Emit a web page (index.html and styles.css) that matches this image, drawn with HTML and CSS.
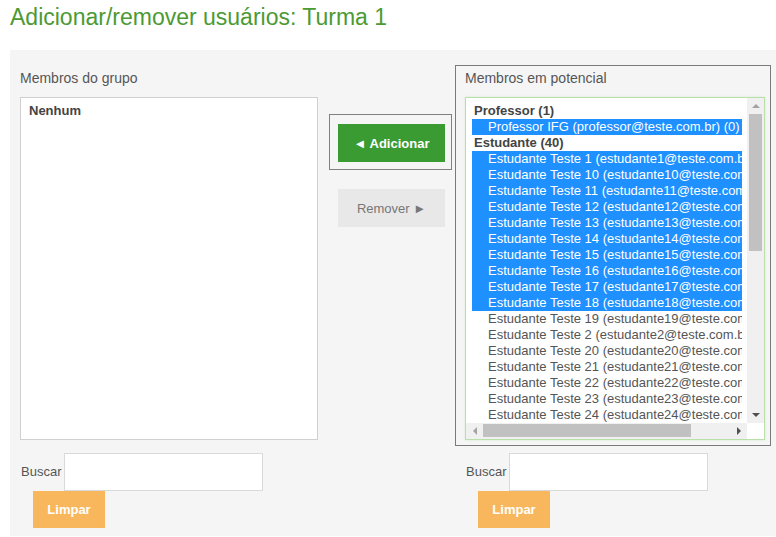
FILE: index.html
```html
<!DOCTYPE html>
<html lang="pt-BR">
<head>
<meta charset="utf-8">
<title>Adicionar/remover usuários: Turma 1</title>
<link rel="stylesheet" href="styles.css">
</head>
<body>
<h1 class="title">Adicionar/remover usuários: Turma 1</h1>
<div class="panel">
  <div class="col-left">
    <div class="cap">Membros do grupo</div>
    <div class="listbox plain">
      <div class="grp">Nenhum</div>
    </div>
  </div>
  <div class="col-mid">
    <div class="add-wrap"><button class="btn btn-add">◄ Adicionar</button></div>
    <button class="btn btn-remove">Remover ►</button>
  </div>
  <div class="col-right">
    <div class="cap">Membros em potencial</div>
    <div class="listbox focus">
      <div class="lb-content">
        <div class="grp">Professor (1)</div>
        <div class="opt sel">Professor IFG (professor@teste.com.br) (0)</div>
        <div class="grp">Estudante (40)</div>
        <div class="opt sel">Estudante Teste 1 (estudante1@teste.com.br) (0)</div>
        <div class="opt sel">Estudante Teste 10 (estudante10@teste.com.br) (0)</div>
        <div class="opt sel">Estudante Teste 11 (estudante11@teste.com.br) (0)</div>
        <div class="opt sel">Estudante Teste 12 (estudante12@teste.com.br) (0)</div>
        <div class="opt sel">Estudante Teste 13 (estudante13@teste.com.br) (0)</div>
        <div class="opt sel">Estudante Teste 14 (estudante14@teste.com.br) (0)</div>
        <div class="opt sel">Estudante Teste 15 (estudante15@teste.com.br) (0)</div>
        <div class="opt sel">Estudante Teste 16 (estudante16@teste.com.br) (0)</div>
        <div class="opt sel">Estudante Teste 17 (estudante17@teste.com.br) (0)</div>
        <div class="opt sel">Estudante Teste 18 (estudante18@teste.com.br) (0)</div>
        <div class="opt">Estudante Teste 19 (estudante19@teste.com.br) (0)</div>
        <div class="opt">Estudante Teste 2 (estudante2@teste.com.br) (0)</div>
        <div class="opt">Estudante Teste 20 (estudante20@teste.com.br) (0)</div>
        <div class="opt">Estudante Teste 21 (estudante21@teste.com.br) (0)</div>
        <div class="opt">Estudante Teste 22 (estudante22@teste.com.br) (0)</div>
        <div class="opt">Estudante Teste 23 (estudante23@teste.com.br) (0)</div>
        <div class="opt">Estudante Teste 24 (estudante24@teste.com.br) (0)</div>
        <div class="opt">Estudante Teste 25 (estudante25@teste.com.br) (0)</div>
        <div class="opt">Estudante Teste 26 (estudante26@teste.com.br) (0)</div>
      </div>
      <div class="vbar">
        <div class="arrow-btn"><span class="tri tri-up"></span></div>
        <div class="vthumb"></div>
        <div class="spacer"></div>
        <div class="arrow-btn"><span class="tri tri-down"></span></div>
      </div>
      <div class="hbar">
        <div class="arrow-btn h"><span class="tri tri-left"></span></div>
        <div class="hthumb"></div>
        <div class="spacer"></div>
        <div class="arrow-btn h"><span class="tri tri-right"></span></div>
      </div>
      <div class="corner"></div>
    </div>
  </div>
  <div class="search search-left">
    <div class="search-row">
      <label class="search-label">Buscar</label>
      <input class="search-input" type="text">
    </div>
    <button class="btn btn-clear">Limpar</button>
  </div>
  <div></div>
  <div class="search search-right">
    <div class="search-row">
      <label class="search-label">Buscar</label>
      <input class="search-input" type="text">
    </div>
    <button class="btn btn-clear">Limpar</button>
  </div>
</div>
</body>
</html>
```
FILE: styles.css
```css
* { box-sizing: border-box; }

body {
  margin: 0;
  background: #fff;
  font-family: "Liberation Sans", Arial, sans-serif;
  color: #555;
}

.title {
  margin: 0;
  height: 50px;
  padding: 2px 0 0 10px;
  font-size: 23px;
  line-height: 30px;
  font-weight: normal;
  color: #4b9a34;
}

.panel {
  margin-left: 10px;
  background: #f5f5f5;
  padding: 15px 0 8px 10px;
  display: grid;
  grid-template-columns: 298px 137px 316px;
  grid-template-rows: 381px auto;
}

.cap {
  font-size: 14px;
  line-height: 16px;
  color: #555;
  margin-bottom: 11px;
}

.col-left { padding-top: 5px; }

.listbox {
  height: 343px;
  background: #fff;
  font-size: 13px;
  line-height: 16px;
}

.listbox.plain {
  border: 1px solid #d0d0d0;
  padding: 5px 0 0 8px;
}

.listbox.focus {
  border: 1px solid #b9e0ab;
  box-shadow: 0 0 2px #d3ecc9;
  display: grid;
  grid-template-columns: 1fr 17px;
  grid-template-rows: 1fr 16px;
}

.grp {
  font-weight: bold;
  color: #444;
  white-space: nowrap;
}

.lb-content {
  overflow: hidden;
  padding: 5px 5px 0 6px;
}

.lb-content .grp { padding-left: 2px; }

.opt {
  padding-left: 16px;
  white-space: nowrap;
  overflow: hidden;
  color: #555;
}

.opt.sel {
  background: #1e90ff;
  color: #fff;
}

.vbar {
  background: #f0f0f0;
  display: flex;
  flex-direction: column;
}

.hbar {
  background: #f0f0f0;
  display: flex;
  align-items: center;
}

.corner { background: #fff; }

.spacer { flex: 1; }

.arrow-btn {
  height: 16px;
  width: 17px;
  display: flex;
  align-items: center;
  justify-content: center;
  flex: none;
}

.arrow-btn.h { height: 16px; }

.vthumb {
  height: 137px;
  margin: 0 2px 0 2px;
  background: #c1c1c1;
}

.hthumb {
  width: 208px;
  height: 13px;
  margin-top: -1px;
  background: #c1c1c1;
}

.tri {
  width: 0;
  height: 0;
  border-style: solid;
}

.tri-up {
  border-width: 0 4px 4px 4px;
  border-color: transparent transparent #a3a3a3 transparent;
}

.tri-down {
  border-width: 4px 4px 0 4px;
  border-color: #505050 transparent transparent transparent;
}

.tri-left {
  border-width: 4px 4px 4px 0;
  border-color: transparent #a3a3a3 transparent transparent;
}

.tri-right {
  border-width: 4px 0 4px 4px;
  border-color: transparent transparent transparent #505050;
}

.col-mid { padding-top: 49px; }

.add-wrap {
  width: 123px;
  height: 56px;
  margin-left: 11px;
  border: 1px solid #808080;
  padding: 9px 0 0 8px;
}

.btn {
  border: 0;
  font-family: "Liberation Sans", Arial, sans-serif;
  font-size: 13px;
  padding: 0;
  cursor: pointer;
}

.btn-add {
  width: 107px;
  height: 38px;
  background: #399b32;
  color: #fff;
  font-weight: bold;
}

.btn-remove {
  display: block;
  width: 107px;
  height: 38px;
  margin: 19px 0 0 20px;
  background: #e8e8e8;
  color: #777;
}

.col-right {
  border: 1px solid #7a7a7a;
  padding: 4px 5px 5px 9px;
}

.search { margin-top: 7px; }

.search-left { padding-left: 1px; }
.search-right { padding-left: 11px; }

.search-row {
  display: flex;
  align-items: center;
  height: 38px;
}

.search-label {
  width: 43px;
  font-size: 13px;
  color: #555;
  padding-bottom: 2px;
}

.search-input {
  width: 199px;
  height: 38px;
  border: 1px solid #d9d9d9;
  background: #fff;
  margin: 0;
}

.btn-clear {
  display: block;
  width: 72px;
  height: 37px;
  margin-left: 12px;
  background: #f8b75c;
  color: #fff;
  font-weight: bold;
}
```
